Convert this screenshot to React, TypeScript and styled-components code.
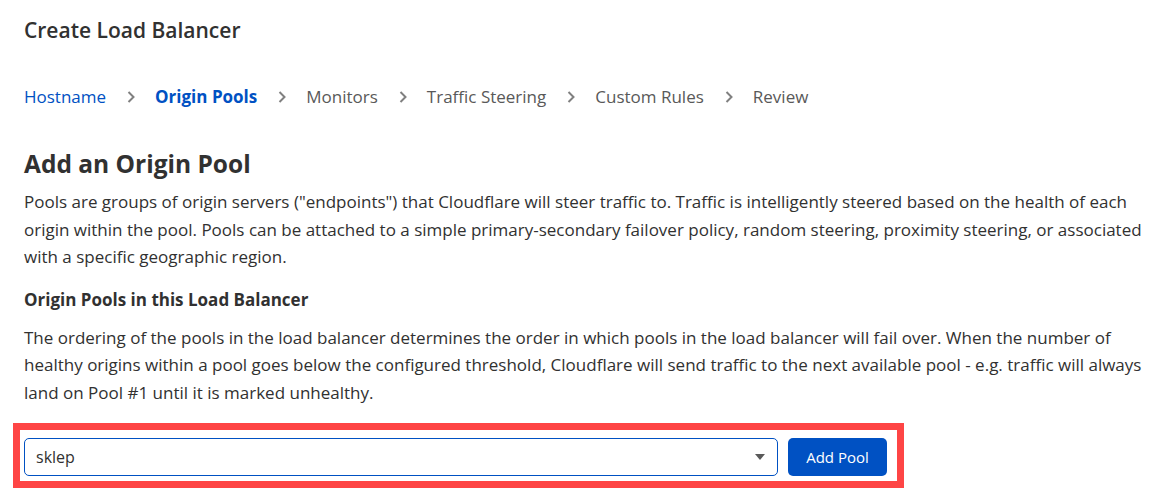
import React, { useState } from 'react';
import styled, { createGlobalStyle } from 'styled-components';

// Global
const GlobalStyle = createGlobalStyle`
  html, body {
    margin: 0;
    padding: 0;
    background: #ffffff;
  }
  body {
    font-family: 'Open Sans', 'Noto Sans', sans-serif;
    color: #313131;
  }
`;

// Types
interface Step {
  label: string;
  state: 'done' | 'active' | 'todo';
}

// Styled Components
const Page = styled.div`
  padding: 15px 24px 0 24px;
`;

const PageTitle = styled.h1`
  margin: 0;
  font-size: 21px;
  font-weight: 600;
  line-height: 30px;
  color: #313131;
`;

const Breadcrumbs = styled.nav`
  display: flex;
  align-items: center;
  margin-top: 37px;
  height: 30px;
`;

const Crumb = styled.span<{ state: Step['state'] }>`
  font-size: 17px;
  line-height: 24px;
  color: ${props => (props.state === 'todo' ? '#595959' : '#0051c3')};
  font-weight: ${props => (props.state === 'active' ? 700 : 400)};
  cursor: ${props => (props.state === 'done' ? 'pointer' : 'default')};
`;

const Chevron = styled.svg`
  width: 14px;
  height: 14px;
  margin: 0 17px 0 18px;
  flex: none;
`;

const SectionTitle = styled.h2`
  margin: 37px 0 0 0;
  font-size: 24.5px;
  font-weight: 700;
  line-height: 30px;
  color: #313131;
`;

const Paragraph = styled.p<{ gap: number }>`
  margin: ${props => props.gap}px 0 0 0;
  font-size: 17px;
  line-height: 27.5px;
  color: #313131;
`;

const SubTitle = styled.h3`
  margin: 17px 0 0 0;
  font-size: 17px;
  font-weight: 700;
  line-height: 24px;
  color: #313131;
`;

const Highlight = styled.div`
  display: inline-flex;
  align-items: center;
  gap: 10px;
  margin: 17px 0 0 -11px;
  padding: 8px 10px 5px 4px;
  border: 7px solid #fe4545;
`;

const SelectBox = styled.div`
  position: relative;
  width: 754px;
  height: 38px;
  box-sizing: border-box;
  border: 1px solid #0051c3;
  border-radius: 5px;
  display: flex;
  align-items: center;
  padding: 0 11px;
  background: #ffffff;
  cursor: pointer;
`;

const SelectValue = styled.span`
  font-size: 16px;
  color: #313131;
  flex: 1;
`;

const Caret = styled.span`
  width: 0;
  height: 0;
  border-left: 5px solid transparent;
  border-right: 5px solid transparent;
  border-top: 6px solid #595959;
  margin-right: 1px;
`;

const AddButton = styled.button`
  width: 99px;
  height: 38px;
  border: none;
  border-radius: 5px;
  background: #0051c3;
  color: #ffffff;
  font-family: 'Open Sans', 'Noto Sans', sans-serif;
  font-size: 15px;
  cursor: pointer;

  &:hover {
    background: #003681;
  }
`;

const steps: Step[] = [
  { label: 'Hostname', state: 'done' },
  { label: 'Origin Pools', state: 'active' },
  { label: 'Monitors', state: 'todo' },
  { label: 'Traffic Steering', state: 'todo' },
  { label: 'Custom Rules', state: 'todo' },
  { label: 'Review', state: 'todo' },
];

function App() {
  const [pool] = useState('sklep');

  return (
    <>
      <GlobalStyle />
      <Page>
        <PageTitle>Create Load Balancer</PageTitle>

        <Breadcrumbs>
          {steps.map((step, i) => (
            <React.Fragment key={step.label}>
              {i > 0 && (
                <Chevron viewBox="0 0 14 14" fill="none">
                  <path d="M4.5 2 L9.5 7 L4.5 12" stroke="#808080" strokeWidth="2" />
                </Chevron>
              )}
              <Crumb state={step.state}>{step.label}</Crumb>
            </React.Fragment>
          ))}
        </Breadcrumbs>

        <SectionTitle>Add an Origin Pool</SectionTitle>
        <Paragraph gap={9}>
          Pools are groups of origin servers ("endpoints") that Cloudflare will steer traffic to. Traffic is intelligently steered based on the health of each origin within the pool. Pools can be attached to a simple primary-secondary failover policy, random steering, proximity steering, or associated with a specific geographic region.
        </Paragraph>

        <SubTitle>Origin Pools in this Load Balancer</SubTitle>
        <Paragraph gap={12}>
          The ordering of the pools in the load balancer determines the order in which pools in the load balancer will fail over. When the number of healthy origins within a pool goes below the configured threshold, Cloudflare will send traffic to the next available pool - e.g. traffic will always land on Pool #1 until it is marked unhealthy.
        </Paragraph>

        <Highlight>
          <SelectBox>
            <SelectValue>{pool}</SelectValue>
            <Caret />
          </SelectBox>
          <AddButton>Add Pool</AddButton>
        </Highlight>
      </Page>
    </>
  );
}

export default App;
